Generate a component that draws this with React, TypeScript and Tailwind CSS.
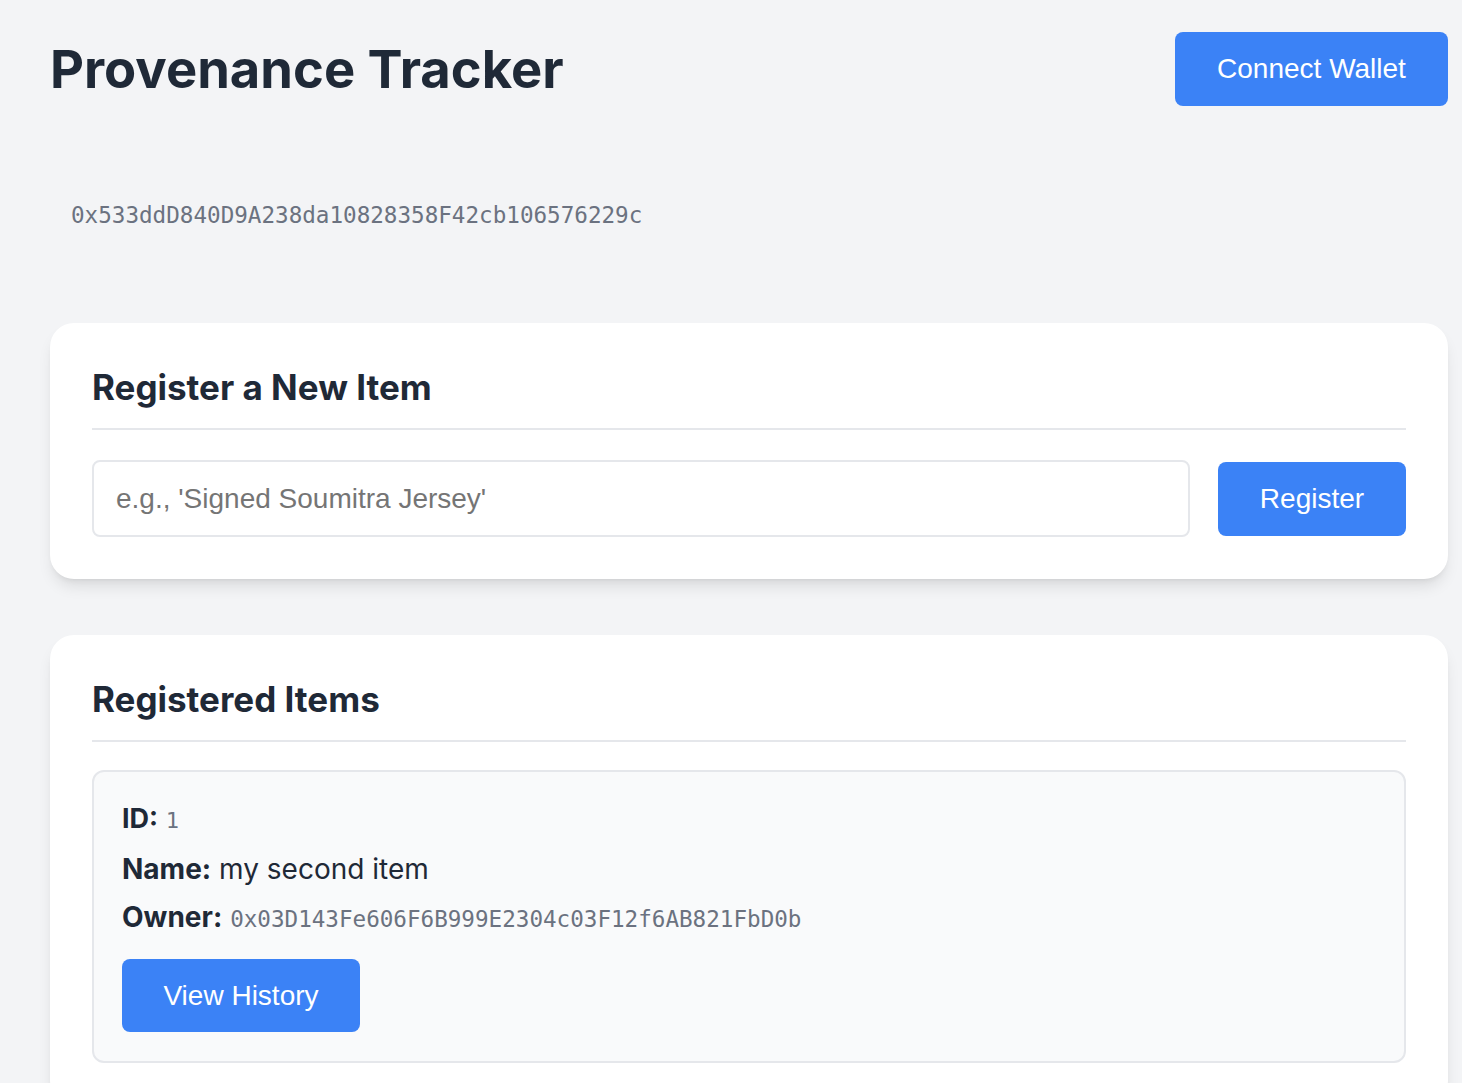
const sans = "font-['Inter',sans-serif]";
const arial = "font-['Liberation_Sans',Arial,sans-serif]";
const mono = "font-['DejaVu_Sans_Mono',monospace]";

type Item = {
  id: number;
  name: string;
  owner: string;
};

const items: Item[] = [
  { id: 1, name: "my second item", owner: "0x03D143Fe606F6B999E2304c03F12f6AB821FbD0b" },
];

const ItemCard = ({ id, name, owner }: Item) => (
  <div className="rounded-xl border-2 border-[#e5e7eb] bg-[#f9fafb] px-[28px] pt-[23px] pb-[29px]">
    <p className={`${sans} text-[27px] leading-[48px] text-[#1f2937]`}>
      <span className="font-bold">ID:</span>{" "}
      <span className={`${mono} text-[22px] text-[#6b7280]`}>{id}</span>
    </p>
    <p className={`${sans} text-[28px] leading-[48px] text-[#1f2937]`}>
      <span className="font-bold">Name:</span> {name}
    </p>
    <p className={`${sans} text-[28px] leading-[48px] text-[#1f2937]`}>
      <span className="font-bold">Owner:</span>{" "}
      <span className={`${mono} text-[22.6px] text-[#6b7280]`}>{owner}</span>
    </p>
    <button
      className={`${arial} mt-[16px] h-[73px] w-[238px] rounded-lg bg-[#3b82f6] text-[28px] text-white`}
    >
      View History
    </button>
  </div>
);

export default function App() {
  return (
    <div className="min-h-screen bg-[#f3f4f6] px-[50px] pt-[32px] pb-[40px]">
      <header className="flex items-start justify-between">
        <h1 className={`${sans} mt-[1px] text-[52.5px] font-bold leading-[72px] text-[#1f2937]`}>
          Provenance Tracker
        </h1>
        <button
          className={`${arial} -mr-[36px] h-[74px] w-[273px] rounded-lg bg-[#3b82f6] text-[28px] text-white`}
        >
          Connect Wallet
        </button>
      </header>

      <p className={`${mono} mt-[92px] pl-[21px] text-[22.6px] leading-[34px] text-[#6b7280]`}>
        0x533ddD840D9A238da10828358F42cb106576229c
      </p>

      <section className="mt-[91px] -mr-[36px] rounded-3xl bg-white px-[42px] pt-[42px] pb-[42px] shadow-lg">
        <h2 className={`${sans} text-[35px] font-bold leading-[44px] text-[#1f2937]`}>
          Register a New Item
        </h2>
        <div className="mt-[19px] border-t-2 border-[#e5e7eb]" />
        <div className="mt-[30px] flex items-center gap-[28px]">
          <input
            className={`${arial} h-[77px] flex-1 rounded-lg border-2 border-[#e5e7eb] px-[22px] text-[28px] text-[#1f2937] outline-none placeholder:text-[#757575]`}
            placeholder="e.g., 'Signed Soumitra Jersey'"
          />
          <button
            className={`${arial} h-[74px] w-[188px] rounded-lg bg-[#3b82f6] text-[28px] text-white`}
          >
            Register
          </button>
        </div>
      </section>

      <section className="mt-[56px] -mr-[36px] rounded-3xl bg-white px-[42px] pt-[42px] pb-[42px] shadow-lg">
        <h2 className={`${sans} text-[35px] font-bold leading-[44px] text-[#1f2937]`}>
          Registered Items
        </h2>
        <div className="mt-[19px] border-t-2 border-[#e5e7eb]" />
        <div className="mt-[28px] flex flex-col gap-[24px]">
          {items.map((it) => (
            <ItemCard key={it.id} {...it} />
          ))}
        </div>
      </section>
    </div>
  );
}
